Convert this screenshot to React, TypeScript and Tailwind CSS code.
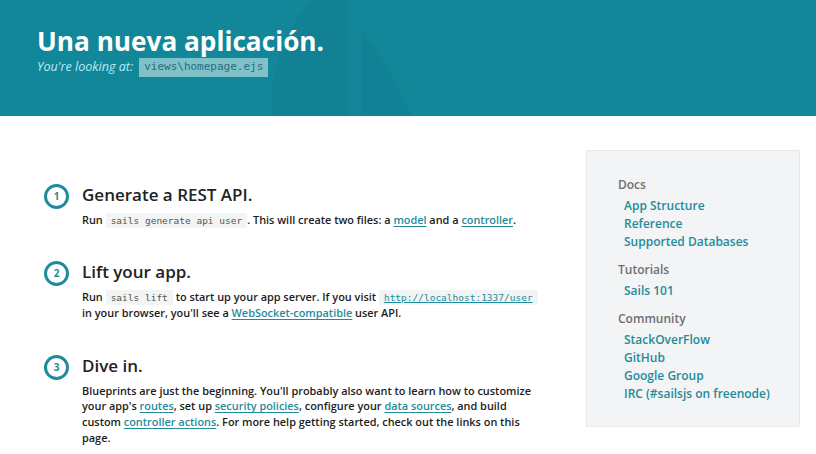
import React from 'react';

const font = { fontFamily: '"Open Sans", "Noto Sans", sans-serif' };

function Code({ children }: { children: React.ReactNode }) {
  return (
    <code className="bg-[#f3f4f4] px-[5px] py-[2px] font-['DejaVu_Sans_Mono',monospace] text-[9.5px] font-normal text-[#555]">
      {children}
    </code>
  );
}

function Link({ children }: { children: React.ReactNode }) {
  return <a className="text-[#1f8b9b] underline underline-offset-2">{children}</a>;
}

function Step({ n, title, className, children }: { n: number; title: string; className?: string; children: React.ReactNode }) {
  return (
    <div className={`flex ${className ?? ''}`}>
      <div className="mt-[1px] flex h-[25px] w-[25px] shrink-0 items-center justify-center rounded-full border-[3px] border-[#1f8b9b] text-[10px] font-bold text-[#1f8b9b]">
        {n}
      </div>
      <div className="ml-[13px]">
        <h2 className="text-[17px] font-semibold leading-[24px] text-[#222]">{title}</h2>
        <p className="mt-[5px] text-[10.9px] font-semibold leading-[15.6px] text-[#1c1c1c]">{children}</p>
      </div>
    </div>
  );
}

export default function App() {
  return (
    <div style={font} className="min-h-[454px] bg-white">
      <header className="relative h-[116px] overflow-hidden bg-[#13879a]">
        <svg className="absolute left-0 top-0" width="816" height="116" viewBox="0 0 816 116">
          <path d="M347 0 L312 0 A155 155 0 0 0 272 116 L347 116 Z" fill="#0b6a7a" opacity="0.2" />
          <path d="M347 0 L362 0 L362 116 L347 116 Z" fill="#0b6a7a" opacity="0.05" />
          <path d="M362 28 Q 392 70 412 116 L362 116 Z" fill="#0b6a7a" opacity="0.16" />
        </svg>
        <div className="relative pl-[37px] pt-[24px]">
          <h1 className="text-[26.2px] font-bold leading-[34px] text-white">Una nueva aplicación.</h1>
          <div className="flex items-center">
            <span className="text-[12.6px] italic text-[#b8ecf3]">You're looking at:</span>
            <span className="ml-[6px] bg-[#7fc2ca] px-[5px] py-[1px] font-['DejaVu_Sans_Mono',monospace] text-[11px] text-[#2b6d77]">
              views\homepage.ejs
            </span>
          </div>
        </div>
      </header>

      <div className="flex pl-[44px] pr-[16px] pt-[34px]">
        <div className="flex w-[500px] flex-col gap-[31px] pt-[33px]">
          <Step n={1} title="Generate a REST API.">
            Run <Code>sails generate api user</Code>. This will create two files: a <Link>model</Link> and a{' '}
            <Link>controller</Link>.
          </Step>
          <Step n={2} title="Lift your app.">
            Run <Code>sails lift</Code> to start up your app server. If you visit{' '}
            <Code>
              <span className="text-[#1f8b9b] underline">http://localhost:1337/user</span>
            </Code>{' '}
            in your browser, you'll see a <Link>WebSocket-compatible</Link> user API.
          </Step>
          <Step n={3} title="Dive in." className="mt-[2px]">
            Blueprints are just the beginning. You'll probably also want to learn how to customize your app's{' '}
            <Link>routes</Link>, set up <Link>security policies</Link>, configure your <Link>data sources</Link>, and
            build custom <Link>controller actions</Link>. For more help getting started, check out the links on this
            page.
          </Step>
        </div>

        <aside className="ml-auto h-[277px] w-[214px] border border-[#e7e9ea] bg-[#f2f4f5] pl-[31px] pt-[25px]">
          {[
            { head: 'Docs', links: ['App Structure', 'Reference', 'Supported Databases'] },
            { head: 'Tutorials', links: ['Sails 101'] },
            { head: 'Community', links: ['StackOverFlow', 'GitHub', 'Google Group', 'IRC (#sailsjs on freenode)'] },
          ].map((s) => (
            <div key={s.head} className="mb-[10px]">
              <h3 className="text-[12px] font-semibold leading-[18px] text-[#6f6f6f]">{s.head}</h3>
              <ul className="mt-[3px] pl-[6px]">
                {s.links.map((l) => (
                  <li key={l} className="text-[12px] font-semibold leading-[18px] text-[#1f8b9b]">
                    {l}
                  </li>
                ))}
              </ul>
            </div>
          ))}
        </aside>
      </div>
    </div>
  );
}
